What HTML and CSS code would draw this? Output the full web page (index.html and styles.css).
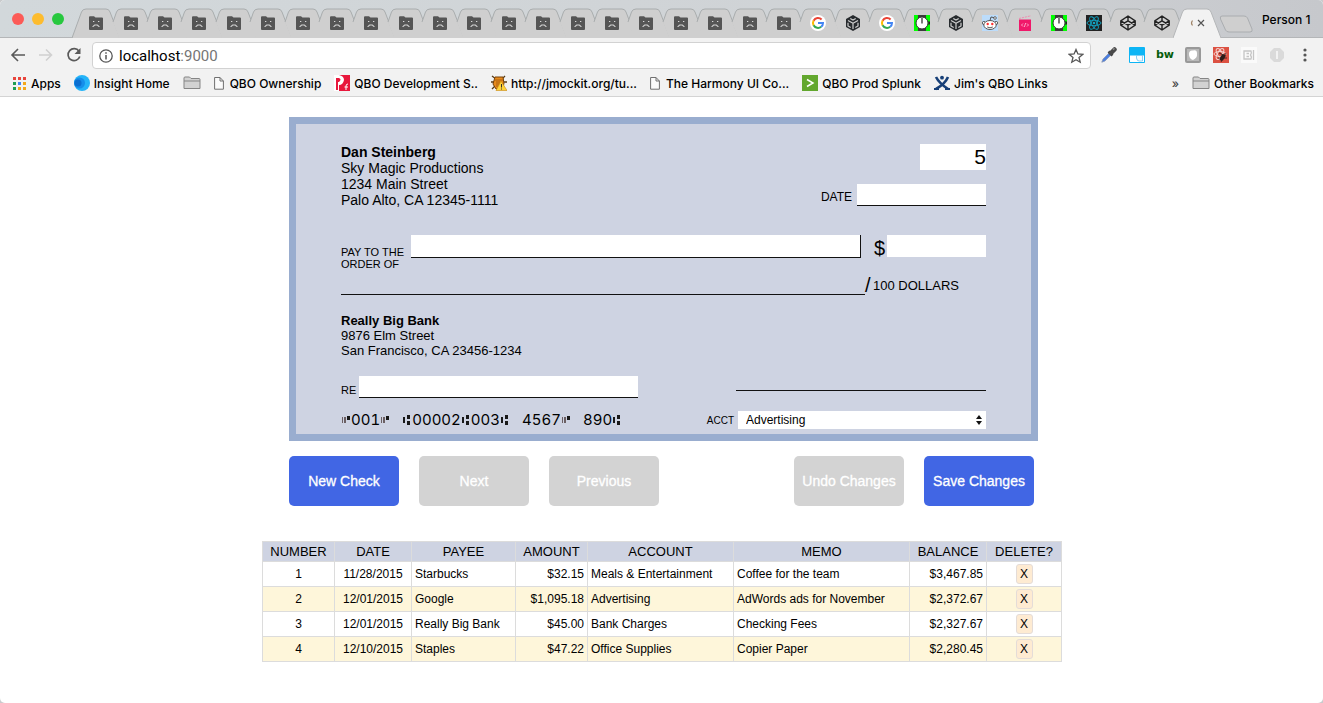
FILE: index.html
```html
<!DOCTYPE html>
<html lang="en">
<head>
<meta charset="utf-8">
<title>Checkbook</title>
<link rel="stylesheet" href="styles.css">
</head>
<body>
<svg class="sprite" aria-hidden="true">
  <symbol id="edge-first" viewBox="0 0 48 30"><path d="M0 30L9.500 4Q10.500 1 14 1H34Q37 1 38 4L48 30z" fill="#cfcfcf"/><path d="M0 30L9.500 4Q10.500 1 14 1H34Q37 1 38 4L48 30" fill="none" stroke="#a9adae"/></symbol>
  <symbol id="edge" viewBox="0 0 48 30"><path d="M12 30L6 14L9.500 4Q10.500 1 14 1H34Q37 1 38 4L48 30z" fill="#cfcfcf"/><path d="M6 14L9.500 4Q10.500 1 14 1H34Q37 1 38 4L48 30" fill="none" stroke="#a9adae"/></symbol>
  <symbol id="edge-active" viewBox="0 0 48 30"><path d="M0 30L9.500 4Q10.500 1 14 1H34Q37 1 38 4L48 30z" fill="#f2f2f2"/><path d="M0 30L9.500 4Q10.500 1 14 1H34Q37 1 38 4L48 30" fill="none" stroke="#b4b6b8"/></symbol>
  <symbol id="sad" viewBox="0 0 16 16"><path d="M1 2.200Q1 1.200 2 1.200H6L7.500 2.500H14Q15 2.500 15 3.500V14Q15 15 14 15H2Q1 15 1 14z" fill="#555"/><path d="M5 6.500H6.300M10 6.500H11.300M5 12V11H6.200V10H9.800V11H11V12" fill="none" stroke="#d6d6d6" stroke-width="1"/></symbol>
  <symbol id="google" viewBox="0 0 16 16"><circle cx="8" cy="8" r="8" fill="#fff"/><path d="M11.600 4.500A5 5 0 0 0 3.600 5.700" fill="none" stroke="#ea4335" stroke-width="2"/><path d="M3.600 5.600A5 5 0 0 0 3.600 10.400" fill="none" stroke="#fbbc05" stroke-width="2"/><path d="M3.600 10.300A5 5 0 0 0 11.200 11.800" fill="none" stroke="#34a853" stroke-width="2"/><path d="M8 8H13A5 5 0 0 1 11.200 11.800" fill="none" stroke="#4285f4" stroke-width="2"/></symbol>
  <symbol id="cube" viewBox="0 0 16 16"><path d="M8 0L15 4V12L8 16L1 12V4z" fill="#272b2e"/><path d="M8 8.300V14M8 8.300L3 5.400M8 8.300L13 5.400M5.300 3.400L8 5L10.700 3.400M3 7.800V10.900L5.700 12.400M13 7.800V10.900L10.300 12.400" fill="none" stroke="#cfcfcf" stroke-width="1.200"/></symbol>
  <symbol id="watch" viewBox="0 0 16 16"><path d="M0 0H16V16H0z" fill="#0f0"/><path d="M4 0H12V16H4z" fill="#3b3b3b"/><circle cx="8" cy="8" r="6" fill="#fff" stroke="#333"/><path d="M8 3V8.500M14 7H15.500V9H14" fill="none" stroke="#222" stroke-width="1.200"/></symbol>
  <symbol id="reddit" viewBox="0 0 16 16"><path d="M0 0H16V16H0z" fill="#bcdcfb"/><circle cx="1.900" cy="8" r="1.600" fill="#fff" stroke="#444" stroke-width=".8"/><circle cx="14.100" cy="8" r="1.600" fill="#fff" stroke="#444" stroke-width=".8"/><path d="M8 5.500L9 2L12 2.600" fill="none" stroke="#444" stroke-width=".9"/><circle cx="13" cy="3" r="1.300" fill="#fff" stroke="#444" stroke-width=".8"/><ellipse cx="8" cy="10" rx="6.200" ry="4.500" fill="#fff" stroke="#444" stroke-width=".9"/><circle cx="5.700" cy="9" r="1.200" fill="#f33"/><circle cx="10.300" cy="9" r="1.200" fill="#f33"/><path d="M5.200 12Q8 13.600 10.800 12" fill="none" stroke="#333" stroke-width=".8"/></symbol>
  <symbol id="clap" viewBox="0 0 16 16"><path d="M2 4.500H14V16H2z" fill="#f0186a"/><path d="M2 3.500L14 .800" stroke="#f08ab0" stroke-dasharray="2 1"/><path d="M6 8.500L4.500 10L6 11.500M10 8.500L11.500 10L10 11.500M8.700 8L7.300 12" fill="none" stroke="#ffc4dc" stroke-width=".8"/></symbol>
  <symbol id="react" viewBox="0 0 16 16"><path d="M0 0H16V16H0z" fill="#222"/><g fill="none" stroke="#12a5c4" stroke-width=".9"><ellipse cx="8" cy="8" rx="7" ry="2.700"/><ellipse cx="8" cy="8" rx="7" ry="2.700" transform="rotate(60 8 8)"/><ellipse cx="8" cy="8" rx="7" ry="2.700" transform="rotate(120 8 8)"/></g><circle cx="8" cy="8" r="1.300" fill="#12a5c4"/></symbol>
  <symbol id="codepen" viewBox="0 0 16 16"><path d="M8 1L15.200 5.800V10.200L8 15L.800 10.200V5.800zM8 1V5.800M8 10.200V15M.800 5.800L8 10.200L15.200 5.800M.800 10.200L8 5.800L15.200 10.200" fill="none" stroke="#222" stroke-width="1.400" stroke-linejoin="round"/></symbol>
  <symbol id="folder" viewBox="0 0 18 16"><path d="M1 13.500V3Q1 2 2 2H6.500L8 3.500H16Q17 3.500 17 4.500V13.500z" fill="#d2d2d2" stroke="#858585"/><path d="M1 6H17" stroke="#858585"/></symbol>
  <symbol id="page" viewBox="0 0 10 14"><path d="M.600 1.500H6L9.400 5V13.200H.600zM6 1.500V5H9.400" fill="#fbfbfb" stroke="#707070"/></symbol>
  <symbol id="on-us" viewBox="0 0 10 12"><path d="M1 3H2V9H1zM3 3H5V9H3z" fill="#6b5f63"/><path d="M6 2H9V6H6z" fill="#191919"/></symbol>
  <symbol id="transit" viewBox="0 0 10 12"><path d="M1 3H3V9H1zM5 1H8V5H5zM5 7H8V11H5z" fill="#191919"/></symbol>
</svg>
<div class="window">
  <header class="chrome">
    <div class="strip">
      <div class="lights"><i class="red"></i><i class="amber"></i><i class="green"></i></div>
      <nav class="tabs" aria-label="Tabs">
        <button class="tab"><svg class="edge"><use href="#edge-first"/></svg><svg class="fav"><use href="#sad"/></svg></button>
        <button class="tab"><svg class="edge"><use href="#edge"/></svg><svg class="fav"><use href="#sad"/></svg></button>
        <button class="tab"><svg class="edge"><use href="#edge"/></svg><svg class="fav"><use href="#sad"/></svg></button>
        <button class="tab"><svg class="edge"><use href="#edge"/></svg><svg class="fav"><use href="#sad"/></svg></button>
        <button class="tab"><svg class="edge"><use href="#edge"/></svg><svg class="fav"><use href="#sad"/></svg></button>
        <button class="tab"><svg class="edge"><use href="#edge"/></svg><svg class="fav"><use href="#sad"/></svg></button>
        <button class="tab"><svg class="edge"><use href="#edge"/></svg><svg class="fav"><use href="#sad"/></svg></button>
        <button class="tab"><svg class="edge"><use href="#edge"/></svg><svg class="fav"><use href="#sad"/></svg></button>
        <button class="tab"><svg class="edge"><use href="#edge"/></svg><svg class="fav"><use href="#sad"/></svg></button>
        <button class="tab"><svg class="edge"><use href="#edge"/></svg><svg class="fav"><use href="#sad"/></svg></button>
        <button class="tab"><svg class="edge"><use href="#edge"/></svg><svg class="fav"><use href="#sad"/></svg></button>
        <button class="tab"><svg class="edge"><use href="#edge"/></svg><svg class="fav"><use href="#sad"/></svg></button>
        <button class="tab"><svg class="edge"><use href="#edge"/></svg><svg class="fav"><use href="#sad"/></svg></button>
        <button class="tab"><svg class="edge"><use href="#edge"/></svg><svg class="fav"><use href="#sad"/></svg></button>
        <button class="tab"><svg class="edge"><use href="#edge"/></svg><svg class="fav"><use href="#sad"/></svg></button>
        <button class="tab"><svg class="edge"><use href="#edge"/></svg><svg class="fav"><use href="#sad"/></svg></button>
        <button class="tab"><svg class="edge"><use href="#edge"/></svg><svg class="fav"><use href="#sad"/></svg></button>
        <button class="tab"><svg class="edge"><use href="#edge"/></svg><svg class="fav"><use href="#sad"/></svg></button>
        <button class="tab"><svg class="edge"><use href="#edge"/></svg><svg class="fav"><use href="#sad"/></svg></button>
        <button class="tab"><svg class="edge"><use href="#edge"/></svg><svg class="fav"><use href="#sad"/></svg></button>
        <button class="tab"><svg class="edge"><use href="#edge"/></svg><svg class="fav"><use href="#sad"/></svg></button>
        <button class="tab"><svg class="edge"><use href="#edge"/></svg><svg class="fav"><use href="#google"/></svg></button>
        <button class="tab"><svg class="edge"><use href="#edge"/></svg><svg class="fav"><use href="#cube"/></svg></button>
        <button class="tab"><svg class="edge"><use href="#edge"/></svg><svg class="fav"><use href="#google"/></svg></button>
        <button class="tab"><svg class="edge"><use href="#edge"/></svg><svg class="fav"><use href="#watch"/></svg></button>
        <button class="tab"><svg class="edge"><use href="#edge"/></svg><svg class="fav"><use href="#cube"/></svg></button>
        <button class="tab"><svg class="edge"><use href="#edge"/></svg><svg class="fav"><use href="#reddit"/></svg></button>
        <button class="tab"><svg class="edge"><use href="#edge"/></svg><svg class="fav"><use href="#clap"/></svg></button>
        <button class="tab"><svg class="edge"><use href="#edge"/></svg><svg class="fav"><use href="#watch"/></svg></button>
        <button class="tab"><svg class="edge"><use href="#edge"/></svg><svg class="fav"><use href="#react"/></svg></button>
        <button class="tab"><svg class="edge"><use href="#edge"/></svg><svg class="fav"><use href="#codepen"/></svg></button>
        <button class="tab"><svg class="edge"><use href="#edge"/></svg><svg class="fav"><use href="#codepen"/></svg></button>
        <button class="tab"><svg class="edge"><use href="#edge-active"/></svg><svg class="fav" viewBox="0 0 16 16"><path d="M3.500 5.500Q1.500 8 3.500 10.500" fill="none" stroke="#a08468" stroke-width="1.200"/><path d="M9 5L15 11M15 5L9 11" stroke="#555" stroke-width="1.200"/></svg></button>
      </nav>
      <button class="newtab" aria-label="New tab"><svg width="36" height="18" viewBox="0 0 36 18"><path d="M3 1H25Q27.500 1 28.500 3L33 14Q34 17 31 17H10Q7.500 17 6.500 15L1.500 4Q.500 1 3 1z" fill="#cfcfcf" stroke="#aaadb0"/></svg></button>
      <span class="person">Person 1</span>
    </div>
    <div class="toolbar">
      <button class="tool" aria-label="Back"><svg width="16" height="16" viewBox="0 0 16 16"><path d="M15 8H2M8 2L2 8L8 14" fill="none" stroke="#5a5a5a" stroke-width="1.600"/></svg></button>
      <button class="tool" aria-label="Forward"><svg width="16" height="16" viewBox="0 0 16 16"><path d="M1 8H13M8 2.500L13.500 8L8 13.500" fill="none" stroke="#d0d0d0" stroke-width="1.600"/></svg></button>
      <button class="tool" aria-label="Reload"><svg width="16" height="16" viewBox="0 0 16 16"><path d="M13 4.200A6 6 0 1 0 13.800 9.500" fill="none" stroke="#5a5a5a" stroke-width="1.700"/><path d="M14.500 1V7H8.500z" fill="#5a5a5a"/></svg></button>
      <div class="address">
        <svg width="14" height="14" viewBox="0 0 14 14"><circle cx="7" cy="7" r="6.200" fill="none" stroke="#555" stroke-width="1.300"/><path d="M7 6V10.500M7 3.300V4.800" stroke="#555" stroke-width="1.500"/></svg>
        <span class="url">localhost<span class="port">:9000</span></span>
        <svg width="16" height="16" viewBox="0 0 16 16"><path d="M8 1.500L9.900 6L14.700 6.400L11 9.500L12.200 14.200L8 11.700L3.800 14.200L5 9.500L1.300 6.400L6.100 6z" fill="none" stroke="#555" stroke-width="1.300"/></svg>
      </div>
      <div class="extensions">
        <svg viewBox="0 0 16 16"><path d="M.800 15.200L2 12L8 6L10 8L4 14z" fill="#4c7fe0" stroke="#8a98b5" stroke-width=".8"/><path d="M7.500 4.500L11.500 8.500" stroke="#444" stroke-width="2.500"/><path d="M10 6L13.500 2.500" stroke="#4a4a4a" stroke-width="4.500" stroke-linecap="round"/><path d="M12 2.500L13.500 1.500" stroke="#999" stroke-width="1.500"/></svg>
        <svg viewBox="0 0 16 16"><rect width="16" height="16" rx="1" fill="#0db5f5"/><path d="M1 8.500H7.500V11Q8 14 10 14H13.500V8.500H15V15H1z" fill="#fff"/><path d="M7.500 8.500H13.500V14H10Q8 14 7.500 11z" fill="#f4fbff" stroke="#7cc8f0" stroke-width=".8"/></svg>
        <b class="bw">bw</b>
        <svg viewBox="0 0 16 16"><rect width="16" height="16" rx="2" fill="#999"/><path d="M2 2H14V14H2z" fill="#b9b9b9"/><path d="M4 7Q4 3 8 3.500Q12 2.500 12 6.500Q12.500 11 8 13Q4 12 4 7z" fill="#fff"/></svg>
        <svg viewBox="0 0 16 16"><path d="M0 0H16V16H0z" fill="#dc5142"/><g fill="none" stroke="#f3d2ce"><ellipse cx="7" cy="7" rx="6" ry="2.500"/><ellipse cx="7" cy="7" rx="6" ry="2.500" transform="rotate(60 7 7)"/><ellipse cx="7" cy="7" rx="6" ry="2.500" transform="rotate(120 7 7)"/></g><path d="M6 6L13 9M5 11L14 11M8 15L13 6" stroke="#2d1b18" stroke-width=".8"/><ellipse cx="9.500" cy="10.500" rx="2.200" ry="3.500" fill="#2d1b18" transform="rotate(30 9.500 10.500)"/></svg>
        <svg viewBox="0 0 16 16"><path d="M0 0H16V16H0z" fill="#fafafa"/><path d="M3 4H10Q11 6 9.500 8Q11 10 10 12H3zM5.500 6.500H8M5.500 9.500H8M12.500 3V13" fill="none" stroke="#c5c5c5" stroke-width="1.300"/></svg>
        <svg viewBox="0 0 16 16"><path d="M5 1H11L15 5V11L11 15H5L1 11V5z" fill="#dadada"/><path d="M8 4V12" stroke="#f2f2f2" stroke-width="2"/></svg>
        <svg viewBox="0 0 16 16"><circle cx="8" cy="3" r="1.600" fill="#555"/><circle cx="8" cy="8" r="1.600" fill="#555"/><circle cx="8" cy="13" r="1.600" fill="#555"/></svg>
      </div>
    </div>
    <nav class="bookmarks" aria-label="Bookmarks">
      <a href="#"><svg width="15" height="16" viewBox="0 0 15 16"><path d="M1 2H4V5H1zM6 2H9V5H6zM11 2H14V5H11z" fill="#e8453c"/><path d="M1 7H4V10H1zM1 12H4V15H1z" fill="#1e9d52"/><path d="M6 7H9V10H6z" fill="#4285f4"/><path d="M11 7H14V10H11zM6 12H9V15H6zM11 12H14V15H11z" fill="#f3a71b"/></svg>Apps</a>
      <a href="#"><svg width="16" height="16" viewBox="0 0 16 16"><circle cx="8" cy="8" r="8" fill="#25b4f8"/><circle cx="5.500" cy="8" r="5.500" fill="#158eea"/><circle cx="4" cy="8" r="3.500" fill="#0b6fd0"/></svg>Insight Home</a>
      <a href="#" aria-label="Folder"><svg width="18" height="16"><use href="#folder"/></svg></a>
      <a href="#" class="paged"><svg width="10" height="14"><use href="#page"/></svg>QBO Ownership</a>
      <a href="#"><svg width="16" height="16" viewBox="0 0 16 16"><path d="M0 0H16V16H0z" fill="#e8173c"/><path d="M0 0H5Q10 1 10 5Q9 10 5 10V16H0z" fill="#fff"/><path d="M2 3H5Q8 4 5 7H4V15H2z" fill="#e8173c"/><path d="M14 9Q12 9 12 11V15M10.500 12H14" fill="none" stroke="#fff"/></svg>QBO Development S..</a>
      <a href="#"><svg width="16" height="16" viewBox="0 0 16 16"><path d="M1 1L5 4M14 1L11 4M0 7H3M16 7H13M1 14L4 11" stroke="#573b18" stroke-width="1.300"/><path d="M4 2H12L13 9L10 14H5L2 9z" fill="#e88a1c" stroke="#744009"/><path d="M4 5H12M6 6V12M8 6V12" stroke="#a8600f"/><path d="M10 6L16 15.500H5z" fill="#ffd33a" stroke="#c88811" stroke-width=".6"/><path d="M10.500 9V12.500M10.500 13.500V14.500" stroke="#333"/></svg>http://jmockit.org/tu...</a>
      <a href="#" class="paged"><svg width="10" height="14"><use href="#page"/></svg>The Harmony UI Co...</a>
      <a href="#"><svg width="16" height="16" viewBox="0 0 16 16"><path d="M0 0H16V16H0z" fill="#62a72e"/><path d="M5 4.500L11 8L5 11.500" fill="none" stroke="#fff" stroke-width="1.500"/></svg>QBO Prod Splunk</a>
      <a href="#"><svg width="16" height="16" viewBox="0 0 16 16"><path d="M2 2Q5 8 14 14M14 2Q11 9 2 14" fill="none" stroke="#173f77" stroke-width="2.600"/><circle cx="8" cy="2.700" r="1.900" fill="#173f77"/><path d="M0 14H5M11 14H16" stroke="#173f77" stroke-width="2"/></svg>Jim's QBO Links</a>
      <span class="more">»</span>
      <a href="#"><svg width="18" height="16"><use href="#folder"/></svg>Other Bookmarks</a>
    </nav>
  </header>

  <main class="page">
    <form class="book">
      <section class="check">
        <div class="top">
          <address class="owner"><b>Dan Steinberg</b><br>Sky Magic Productions<br>1234 Main Street<br>Palo Alto, CA 12345-1111</address>
          <div class="meta">
            <input class="number" aria-label="Check number" value="5">
            <div class="date"><label for="date">DATE</label><input id="date"></div>
          </div>
        </div>
        <div class="pay">
          <label class="small payto" for="payee">PAY TO THE<br>ORDER OF</label>
          <input class="payee" id="payee">
          <label class="dollar" for="amount">$</label>
          <input class="amount" id="amount">
        </div>
        <div class="written"><span class="rule"></span><span class="slash">/</span><span class="dollars">100 DOLLARS</span></div>
        <address class="bank"><b>Really Big Bank</b><br>9876 Elm Street<br>San Francisco, CA 23456-1234</address>
        <div class="memo-row">
          <label class="small" for="memo">RE</label><input id="memo">
          <span class="signature"></span>
        </div>
        <div class="bottom">
          <div class="micr"><svg><use href="#on-us"/></svg>001<svg><use href="#on-us"/></svg><i></i><svg><use href="#transit"/></svg>00002<svg><use href="#transit"/></svg>003<svg><use href="#transit"/></svg><i></i>4567<svg><use href="#on-us"/></svg><i></i>890<svg><use href="#transit"/></svg></div>
          <label class="acct" for="account">ACCT</label>
          <div class="picker">
            <select id="account"><option>Advertising</option><option>Bank Charges</option><option>Meals &amp; Entertainment</option><option>Office Supplies</option></select>
            <svg width="6" height="12" viewBox="0 0 6 12"><path d="M0 5L3 1L6 5zM0 7H6L3 11z" fill="#111"/></svg>
          </div>
        </div>
      </section>
      <div class="actions">
        <button type="button" class="primary">New Check</button>
        <button type="button" disabled>Next</button>
        <button type="button" disabled>Previous</button>
        <button type="button" class="undo" disabled>Undo Changes</button>
        <button type="button" class="primary">Save Changes</button>
      </div>
    </form>
    <table class="register">
      <colgroup><col class="w72"><col class="w77"><col class="w104"><col class="w72"><col class="w146"><col class="w176"><col class="w77"><col class="w75"></colgroup>
      <thead><tr><th>NUMBER</th><th>DATE</th><th>PAYEE</th><th>AMOUNT</th><th>ACCOUNT</th><th>MEMO</th><th>BALANCE</th><th>DELETE?</th></tr></thead>
      <tbody>
        <tr><td class="mid">1</td><td class="mid">11/28/2015</td><td>Starbucks</td><td class="num">$32.15</td><td>Meals &amp; Entertainment</td><td>Coffee for the team</td><td class="num">$3,467.85</td><td class="mid"><button>X</button></td></tr>
        <tr><td class="mid">2</td><td class="mid">12/01/2015</td><td>Google</td><td class="num">$1,095.18</td><td>Advertising</td><td>AdWords ads for November</td><td class="num">$2,372.67</td><td class="mid"><button>X</button></td></tr>
        <tr><td class="mid">3</td><td class="mid">12/01/2015</td><td>Really Big Bank</td><td class="num">$45.00</td><td>Bank Charges</td><td>Checking Fees</td><td class="num">$2,327.67</td><td class="mid"><button>X</button></td></tr>
        <tr><td class="mid">4</td><td class="mid">12/10/2015</td><td>Staples</td><td class="num">$47.22</td><td>Office Supplies</td><td>Copier Paper</td><td class="num">$2,280.45</td><td class="mid"><button>X</button></td></tr>
      </tbody>
    </table>
  </main>
</div>
</body>
</html>
```
FILE: styles.css
```css
* { box-sizing: border-box; }
body { margin: 0; background: #c9cbcd; color: #000; font-family: "Liberation Sans", Arial, sans-serif; }
button, input, select { font: inherit; color: inherit; margin: 0; padding: 0; border: 0; border-radius: 0; }
button { background: none; }
svg { display: block; flex: none; }
.sprite { display: none; }
.window { min-height: 100vh; background: #fff; border-radius: 5px; overflow: hidden; }

/* browser frame */
.chrome { font-family: Inter, sans-serif; background: #f2f2f2; border-bottom: 1px solid #d4d4d4; }
.strip { display: flex; height: 38px; background: linear-gradient(90deg, #d2d8db, #cfd2d5 70%, #c6c8cc); border-bottom: 1px solid #b4b6b8; }
.lights { display: flex; gap: 8px; width: 79px; flex: none; padding: 13px 0 0 12px; }
.lights i { width: 12px; height: 12px; border-radius: 50%; }
.red { background: #fc5b57; }
.amber { background: #fdbc2e; }
.green { background: #27c83f; }
.tabs { display: flex; flex: 1; min-width: 0; padding-top: 8px; }
.tab { display: grid; grid-template-columns: 100%; flex: 1; min-width: 0; place-items: center; align-content: start; height: 30px; }
.edge { grid-area: 1 / 1; width: 48px; height: 30px; }
.tab .fav { grid-area: 1 / 1; width: 16px; height: 16px; }
.newtab { padding: 6px 7px 0 5px; flex: none; align-self: center; padding-top: 10px; }
.person { flex: none; width: 61px; font-size: 12px; font-weight: 500; line-height: 40px; white-space: nowrap; }
.toolbar { display: flex; align-items: center; height: 34px; padding: 0 10px 0 4px; }
.tool { display: grid; place-items: center; width: 28px; height: 28px; flex: none; }
.address { display: flex; align-items: center; flex: 1; height: 27px; margin: 1px 10px 0 4px; padding: 0 6px; gap: 6px; background: #fff; border: 1px solid #d2d2d2; border-radius: 4px; }
.url { flex: 1; font: 15px Roboto, sans-serif; }
.port { color: #757575; }
.extensions { display: flex; align-items: center; gap: 12px; }
.extensions svg { width: 16px; height: 16px; }
.bw { width: 16px; font: bold 11px/16px "DejaVu Sans", sans-serif; color: #065c0b; display: flex; justify-content: center; }
.bookmarks { display: flex; align-items: center; gap: 13px; height: 24px; padding: 0 9px 2px 12px; font-size: 12px; font-weight: 500; white-space: nowrap; }
.bookmarks a { display: flex; align-items: center; gap: 4px; color: inherit; text-decoration: none; }
.bookmarks .paged { gap: 6px; }
.more { margin-left: auto; color: #444; }

/* check */
.page { max-width: 799px; margin: 20px auto 0; }
.book { margin: 0 23px 0 27px; }
.check { padding: 20px 45px 5px; border: 7px solid #99adcf; background: #ced3e2; }
.check input { background: #fff; display: block; }
address { font-style: normal; }
.top { display: flex; justify-content: space-between; }
.owner { font-size: 14px; line-height: 16px; }
.meta { display: flex; flex-direction: column; align-items: flex-end; gap: 14px; }
.number { width: 66px; height: 26px; font-size: 21px; text-align: right; }
.date { display: flex; align-items: center; gap: 5px; font-size: 12px; }
.date label { padding-top: 3px; }
.date input { width: 129px; height: 22px; border-bottom: 1px solid #111; }
.small { font-size: 11px; line-height: 12px; }
.pay { display: flex; align-items: flex-start; margin-top: 27px; }
.payto { width: 70px; padding-top: 11px; flex: none; }
.payee { flex: 1; min-width: 0; height: 23px; border: solid #111; border-width: 0 1px 1px 0; }
.dollar { width: 26px; padding-left: 13px; flex: none; font-size: 20px; line-height: 26px; }
.amount { width: 99px; height: 22px; }
.written { display: flex; height: 20px; margin-top: 5px; }
.rule { flex: 1; border-bottom: 1px solid #111; }
.slash { width: 8px; font-size: 20px; line-height: 20px; }
.dollars { width: 113px; font-size: 13px; line-height: 22px; }
.bank { margin-top: 18px; font-size: 13px; line-height: 15px; }
.memo-row { display: flex; align-items: flex-start; gap: 3px; margin-top: 18px; }
.memo-row label { padding-top: 8px; }
.memo-row input { width: 279px; height: 22px; border-bottom: 1px solid #111; }
.signature { width: 250px; height: 15px; margin-left: auto; border-bottom: 1px solid #111; }
.bottom { display: flex; align-items: center; margin-top: 13px; }
.micr { display: flex; align-items: center; height: 18px; font: 15px/20px Inter, sans-serif; font-variant-numeric: tabular-nums; }
.micr svg { width: 10px; height: 12px; }
.micr i { width: 12px; }
.acct { margin-left: auto; padding-right: 4px; font-size: 10px; }
.picker { display: grid; align-items: center; width: 248px; background: #fff; }
.picker select { grid-area: 1 / 1; width: 100%; height: 18px; padding-left: 8px; appearance: none; background: none; font-size: 12px; }
.picker svg { grid-area: 1 / 1; justify-self: end; margin-right: 4px; pointer-events: none; }

.actions { display: flex; gap: 20px; margin: 15px 4px 0 0; }
.actions button { width: 110px; height: 50px; border-radius: 5px; background: #d3d3d3; color: #fff; font-size: 14px; -webkit-text-stroke: 0.3px #fff; }
.actions .primary { background: #4166e4; }
.actions .undo { margin-left: auto; }

/* register */
.register { width: 100%; margin-top: 35px; table-layout: fixed; border-collapse: collapse; font-size: 12px; }
.register th, .register td { border: 1px solid #dcdcdc; padding: 0 3px; white-space: nowrap; }
.register th { height: 20px; padding: 0; background: #ced3e2; font-size: 13px; font-weight: normal; }
.register td { height: 25px; }
.register tbody tr:nth-child(even) { background: #fef6da; }
.register .mid { text-align: center; }
.register .num { text-align: right; }
.register button { display: block; width: 17px; height: 20px; margin: 0 auto; border: 1px solid #e4dcd8; border-radius: 3px; background: #feebd2; line-height: 18px; }
.w72 { width: 72px; }
.w77 { width: 77px; }
.w104 { width: 104px; }
.w146 { width: 146px; }
.w176 { width: 176px; }
.w75 { width: 75px; }
```
